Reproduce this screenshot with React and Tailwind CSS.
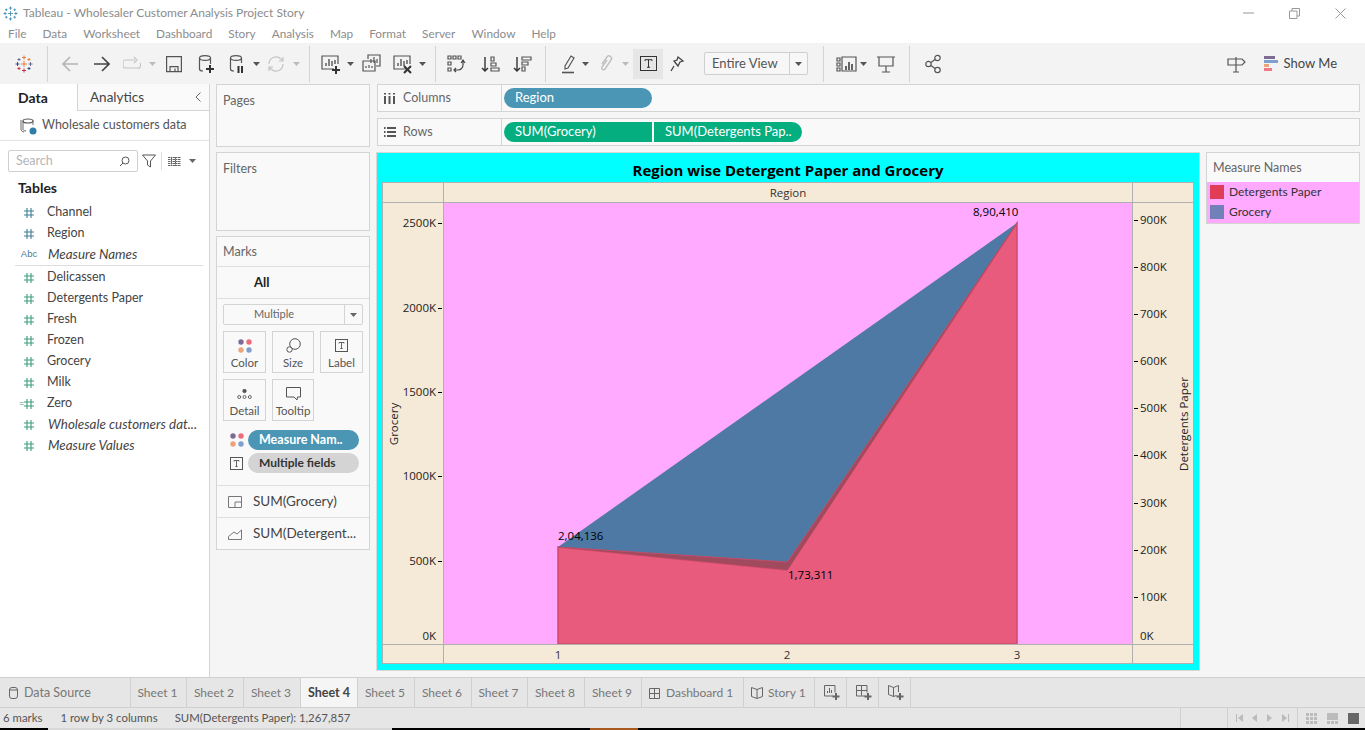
import * as React from 'react';

const FONT = "font-['Lato','Open_Sans',sans-serif]"
const MENU = ['File','Data','Worksheet','Dashboard','Story','Analysis','Map','Format','Server','Window','Help']
const DIMS = [
  { name: 'Channel' },
  { name: 'Region' },
  { name: 'Measure Names', abc: true, italic: true },
]
const MEASURES = [
  { name: 'Delicassen' },
  { name: 'Detergents Paper' },
  { name: 'Fresh' },
  { name: 'Frozen' },
  { name: 'Grocery' },
  { name: 'Milk' },
  { name: 'Zero', calc: true },
  { name: 'Wholesale customers dat...', italic: true },
  { name: 'Measure Values', italic: true },
]
const SHEETS = [
  { name: 'Sheet 1', w: 'w-[56px]' },
  { name: 'Sheet 2', w: 'w-[57px]' },
  { name: 'Sheet 3', w: 'w-[57px]' },
  { name: 'Sheet 4', w: 'w-[57px]', active: true },
  { name: 'Sheet 5', w: 'w-[57px]' },
  { name: 'Sheet 6', w: 'w-[57px]' },
  { name: 'Sheet 7', w: 'w-[56px]' },
  { name: 'Sheet 8', w: 'w-[57px]' },
  { name: 'Sheet 9', w: 'w-[57px]' },
]
const LEFT_TICKS = [['2500K',223],['2000K',307.5],['1500K',392],['1000K',476],['500K',560.5],['0K',644]]
const RIGHT_TICKS = [['900K',220],['800K',267],['700K',314],['600K',361],['500K',408],['400K',455],['300K',503],['200K',550],['100K',597],['0K',644]]

function Caret({ className = '', color = '#888' }) {
  return <svg width="7" height="4" viewBox="0 0 7 4" className={className}><path d="M0 0h7L3.5 4z" fill={color}/></svg>
}
function Divider({ className = '' }) {
  return <div className={`w-px h-[36px] bg-[#d4d4d4] ${className}`}/>
}
function Ico({ w, h = 20, className = '', children, vb }) {
  return <svg width={w} height={h} viewBox={vb || `0 0 ${w} ${h}`} fill="none" stroke="#555" strokeWidth="1.2" className={className}>{children}</svg>
}
function TableauLogo({ size = 18, mono }) {
  const c = mono ? ['#2a7fa8','#2a7fa8','#2a7fa8','#2a7fa8'] : ['#e8762c','#5b6591','#c72035','#1f447a']
  const cross = (x, y, r, col) => <path key={`${x}-${y}`} d={`M${x-r} ${y}h${2*r}M${x} ${y-r}v${2*r}`} stroke={col} strokeWidth="0.9" fill="none"/>
  return (
    <svg width={size} height={size} viewBox="0 0 18 18">
      {cross(9,9,3,c[0])}
      {cross(9,2.5,2,c[0])}{cross(2.5,9,2,c[3])}{cross(15.5,9,2,c[1])}{cross(9,15.5,2,c[2])}
      {cross(4,4.5,1.5,c[1])}{cross(14,4.5,1.5,c[0])}{cross(4,13.5,1.5,c[2])}{cross(14,13.5,1.5,c[3])}
    </svg>
  )
}
function Hash({ color }) {
  return (
    <svg width="10" height="10" viewBox="0 0 10 10" stroke={color} strokeWidth="1.1" fill="none">
      <path d="M3 0v10M7 0v10M0 3h10M0 7h10"/>
    </svg>
  )
}
function Dots({ className = '' }) {
  return (
    <svg width="14" height="14" viewBox="0 0 14 14" className={className}>
      <circle cx="3" cy="3" r="2.7" fill="#7d6b94"/><circle cx="11" cy="3" r="2.7" fill="#ef6a7a"/>
      <circle cx="3" cy="11" r="2.7" fill="#efa37a"/><circle cx="11" cy="11" r="2.7" fill="#7f9fcf"/>
    </svg>
  )
}
function TBox({ size = 13 }) {
  return (
    <svg width={size} height={size} viewBox="0 0 13 13" fill="none" stroke="#555">
      <rect x=".5" y=".5" width="12" height="12"/>
      <path d="M4 4.500V3.500h5v1M6.500 3.500v6M5.300 9.500h2.400" strokeWidth=".9"/>
    </svg>
  )
}
function MiniChart({ children }) {
  return (
    <Ico w={20} h={20}>
      <path d="M13 15H1V2h16v8"/>
      <path d="M5 12V9M8 12V5M11 12V7M14 10V6" strokeWidth="1.4"/>
      {children}
    </Ico>
  )
}

function TitleBar() {
  return (
    <div className="h-[26px] bg-white flex items-center shrink-0">
      <div className="ml-[3px] mr-[5px] flex"><TableauLogo size={15} mono/></div>
      <span className="text-[12px] text-[#8c8c8c]">Tableau - Wholesaler Customer Analysis Project Story</span>
      <div className="ml-auto flex items-center">
        <svg width="11" height="2" viewBox="0 0 11 2" className="mr-[35px]"><path d="M0 1h11" stroke="#999"/></svg>
        <svg width="11" height="11" viewBox="0 0 11 11" fill="none" stroke="#999" className="mr-[35px]"><path d="M.5 3h7.500v7.500H.5zM3 3V.5h7.500V8H8"/></svg>
        <svg width="11" height="11" viewBox="0 0 11 11" fill="none" stroke="#999" className="mr-[19px]"><path d="M.5.5l10 10M10.500.5l-10 10"/></svg>
      </div>
    </div>
  )
}

function MenuBar() {
  return (
    <div className="h-[17px] bg-white flex items-center pl-[8px] pb-[2px] gap-[16px] text-[11.8px] text-[#8c8c8c] shrink-0">
      {MENU.map(m => <span key={m}>{m}</span>)}
    </div>
  )
}

function Toolbar() {
  return (
    <div className="h-[41px] bg-[#f3f3f3] flex items-center pl-[15px] shrink-0">
      <TableauLogo/>
      <Divider className="ml-[14px]"/>
      <Ico w={16} className="ml-[14px]"><path d="M16 10H1M8 3l-7 7 7 7" stroke="#b5b5b5" strokeWidth="1.6"/></Ico>
      <Ico w={16} className="ml-[16px]"><path d="M0 10h15M8 3l7 7-7 7" stroke="#444" strokeWidth="1.6"/></Ico>
      <Ico w={18} className="ml-[13px]"><path d="M12 6h-10a1.500 3 0 0 0 0 8h13a2 3 0 0 0 2-5M11 3l3 3-3 3" stroke="#c4c4c4"/></Ico>
      <Caret className="ml-[8px]" color="#bbb"/>
      <Ico w={16} className="ml-[10px]"><path d="M.6 2.600h14.800v15H.6zM4 17.600v-5h8v5M9 17.600v-3"/></Ico>
      <Ico w={16} className="ml-[16px]"><ellipse cx="7" cy="4" rx="5.500" ry="2.400"/><path d="M1.500 4v11c0 1 1.500 2 3.500 2M12.500 4v6"/><path d="M12 11v8M8 15h8" strokeWidth="2" stroke="#333"/></Ico>
      <Ico w={16} className="ml-[15px]"><ellipse cx="7" cy="4" rx="5.500" ry="2.400"/><path d="M1.500 4v11c0 1 1.500 2 3.500 2M12.500 4v5"/><path d="M9.500 12v7M13 12v7" strokeWidth="2" stroke="#333"/></Ico>
      <Caret className="ml-[8px]" color="#555"/>
      <Ico w={18} className="ml-[7px]"><path d="M2 10a7 7 0 0 1 12-5l2 2M16 10a7 7 0 0 1-12 5l-2-2M16 3v4h-4M2 17v-4h4" stroke="#c4c4c4"/></Ico>
      <Caret className="ml-[8px]" color="#bbb"/>
      <Divider className="ml-[9px]"/>
      <div className="ml-[11px] flex"><MiniChart><path d="M15 12v8M11 16h8" strokeWidth="2" stroke="#333"/></MiniChart></div>
      <Caret className="ml-[6px]" color="#555"/>
      <Ico w={19} className="ml-[8px]"><path d="M6 5V1h12v11h-4"/><path d="M1 7h12v10H1z"/><path d="M9 9V5M12 9V3M15 9V5M4 14v-2M7 14v-3M10 14v-2"/></Ico>
      <div className="ml-[12px] flex"><MiniChart><path d="M11 12l7 7M18 12l-7 7" strokeWidth="2" stroke="#333"/></MiniChart></div>
      <Caret className="ml-[6px]" color="#555"/>
      <Divider className="ml-[9px]"/>
      <Ico w={20} className="ml-[11px]"><path d="M1 2h3v3H1zM6 2h3v3H6zM11 2h3v3h-3zM1 8h3v3H1zM1 14h3v3H1z"/><path d="M16 6v5a5 5 0 0 1-5 5H7M14 9l2-3 2 3M9 14l-2 2 2 2" stroke="#444"/></Ico>
      <Ico w={19} className="ml-[14px]"><path d="M4 3v14M1 14l3 3 3-3" stroke="#333" strokeWidth="1.4"/><path d="M10 3h3v4h-3zM10 9h5v3h-5zM10 14h8v3h-8z"/></Ico>
      <Ico w={19} className="ml-[13px]"><path d="M4 3v14M1 14l3 3 3-3" stroke="#333" strokeWidth="1.4"/><path d="M9 3h9v3H9zM9 8h6v3H9zM9 13h3v4H9z"/></Ico>
      <Divider className="ml-[13px]"/>
      <Ico w={16} className="ml-[15px]"><path d="M4 12L10 2l3 2-6 10-3 1z" stroke="#555"/><path d="M1 18.500h12" strokeWidth="1.600"/></Ico>
      <Caret className="ml-[5px]" color="#555"/>
      <Ico w={16} className="ml-[9px]"><path d="M4 10l5-7a2.500 2.500 0 0 1 4 3l-6 9a1.500 1.500 0 0 1-3-2l5-7" stroke="#c0c0c0" strokeWidth="1.4"/></Ico>
      <Caret className="ml-[8px]" color="#bbb"/>
      <div className="ml-[4px] w-[30px] h-[30px] bg-[#e6e6e6] flex items-center justify-center">
        <svg width="17" height="15" viewBox="0 0 17 15" fill="none" stroke="#333"><rect x=".5" y=".5" width="16" height="14"/><path d="M5 5V3.700h7V5M8.500 3.700v7.600M7 11.300h3"/></svg>
      </div>
      <Ico w={15} className="ml-[7px]"><path d="M8 3l5 4-3 1-2 4-4-5 3-1zM4 12l-3 5" stroke="#444" strokeWidth="1.300"/></Ico>
      <div className="ml-[19px] w-[104px] h-[23px] bg-[#f7f7f7] border border-[#cfcfcf] rounded-[2px] flex items-center">
        <span className="flex-1 pl-[7px] text-[13px] text-[#555]">Entire View</span>
        <div className="w-[18px] h-full border-l border-[#cfcfcf] flex items-center justify-center"><Caret color="#555"/></div>
      </div>
      <Divider className="ml-[15px]"/>
      <Ico w={21} className="ml-[12px]"><path d="M1 4h3v3H1zM1 9h3v3H1zM1 14h3v3H1zM6 3h14v14H6z"/><path d="M10 16v-4M13 16V8M16 16v-6" strokeWidth="1.800"/></Ico>
      <Caret className="ml-[3px]" color="#555"/>
      <Ico w={18} className="ml-[10px]"><path d="M0 3h18M2 3v9h14V3M9 12v6M5 18h8"/></Ico>
      <Divider className="ml-[14px]"/>
      <Ico w={16} className="ml-[15px]"><circle cx="3.500" cy="10" r="2.700"/><circle cx="12.500" cy="4" r="2.700"/><circle cx="12.500" cy="16" r="2.700"/><path d="M6 8.500l4-3M6 11.500l4 3"/></Ico>
      <div className="ml-auto flex items-center pr-[28px]">
        <Ico w={19} h={20}><path d="M9 3v15M6 18h6M1 5h14l3 3-3 3H1z"/></Ico>
        <svg width="14" height="16" viewBox="0 0 14 16" className="ml-[18px]">
          <rect width="11" height="3" fill="#7d6b94"/><rect y="4" width="14" height="3" fill="#7f9fcf"/>
          <rect y="8" width="5" height="3" fill="#efa37a"/><rect y="12" width="8" height="3" fill="#ef7a86"/>
        </svg>
        <span className="ml-[6px] text-[13px] text-[#444]">Show Me</span>
      </div>
    </div>
  )
}

function FieldRow({ f, measure }) {
  return (
    <div className="h-[21px] flex items-center">
      <div className="w-[47px] flex justify-center items-center pl-[11px] relative">
        {f.abc
          ? <span className="font-['Liberation_Sans',sans-serif] text-[9.5px] text-[#4a7c94]">Abc</span>
          : <>
              {f.calc && <span className="absolute left-[19px] text-[9px] leading-none text-[#3d9c7c]">=</span>}
              <Hash color={measure ? '#3d9c7c' : '#3c7f95'}/>
            </>}
      </div>
      <span className={`text-[#444] whitespace-nowrap ${f.italic ? 'italic text-[13.4px] ml-px' : 'text-[12.5px]'}`}>{f.name}</span>
    </div>
  )
}

function DataPane() {
  return (
    <div className="w-[210px] bg-white border-r border-[#d4d4d4] shrink-0 flex flex-col">
      <div className="h-[27px] flex">
        <div className="w-[77px] flex items-center pl-[18px] text-[14px] font-bold text-[#222]">Data</div>
        <div className="flex-1 flex items-center pl-[12px] text-[13.5px] text-[#444] border-l border-b border-[#d4d4d4] bg-[#fafafa]">
          Analytics
          <svg width="6" height="10" viewBox="0 0 6 10" fill="none" stroke="#666" className="ml-auto mr-[8px]"><path d="M5.500.5L1 5l4.500 4.500"/></svg>
        </div>
      </div>
      <div className="h-[30px] flex items-center border-b border-[#e3e3e3] pl-[20px]">
        <Ico w={17} h={18}><ellipse cx="8" cy="4" rx="5" ry="2"/><path d="M3 4v8c0 1 1 2 3 2M13 4v4M1 3v9c0 1 1 3 3 3" strokeWidth=".9"/><circle cx="13" cy="14" r="3.500" fill="#2f7ea8" stroke="none"/></Ico>
        <span className="ml-[5px] text-[12.5px] text-[#555]">Wholesale customers data</span>
      </div>
      <div className="mt-[9px] ml-[8px] flex items-center">
        <div className="w-[130px] h-[22px] border border-[#cfcfcf] rounded-[2px] flex items-center px-[7px]">
          <span className="text-[12.5px] text-[#b5b5b5]">Search</span>
          <svg width="11" height="11" viewBox="0 0 11 11" fill="none" stroke="#555" className="ml-auto"><circle cx="6.500" cy="4.500" r="3.500"/><path d="M4 7l-3 3"/></svg>
        </div>
        <svg width="14" height="14" viewBox="0 0 14 14" fill="none" stroke="#555" className="ml-[4px]"><path d="M.5 1h13L8.500 7v6l-3-2V7z"/></svg>
        <div className="w-px h-[18px] bg-[#ddd] ml-[5px]"/>
        <svg width="13" height="9" viewBox="0 0 13 9" fill="none" stroke="#666" className="ml-[6px]"><path d="M0 .5h13M0 2.500h13M0 4.500h13M0 6.500h13M0 8.500h13M3.500 0v9M7.500 0v9" strokeDasharray="2 .5"/></svg>
        <Caret className="ml-[8px]" color="#666"/>
      </div>
      <div className="mt-[6px] ml-[18px] text-[14px] font-bold text-[#222] leading-[20px]">Tables</div>
      <div className="mt-[4px]">
        {DIMS.map(f => <FieldRow key={f.name} f={f}/>)}
        <div className="h-px bg-[#dcdcdc] ml-[15px] mr-[6px] mb-[1px]"/>
        {MEASURES.map(f => <FieldRow key={f.name} f={f} measure/>)}
      </div>
    </div>
  )
}

function MarkCard({ label, narrow, children }) {
  return (
    <div className={`h-[42px] border border-[#d4d4d4] flex flex-col items-center pt-[5px] ${narrow ? 'w-[42px]' : 'w-[43px]'}`}>
      <div className="h-[17px] flex items-center">{children}</div>
      <span className="text-[11.5px] text-[#555] leading-[15px] mt-[1px]">{label}</span>
    </div>
  )
}

function Panel({ title, className }) {
  return (
    <div className={`bg-[#f9f9f9] border border-[#d4d4d4] pl-[6px] pt-[7px] text-[12.5px] text-[#666] ${className}`}>{title}</div>
  )
}

function MarksPanel() {
  return (
    <div className="h-[314px] bg-[#f9f9f9] border border-[#d4d4d4] flex flex-col">
      <div className="h-[30px] flex items-center pl-[6px] pt-[1px] border-b border-[#dedede] text-[12.5px] text-[#666]">Marks</div>
      <div className="h-[32px] flex items-center pl-[37px] border-b border-[#dedede] text-[13px] font-bold text-[#222]">All</div>
      <div className="mx-[6px] mt-[5px] h-[21px] border border-[#d4d4d4] rounded-[2px] flex items-center">
        <span className="flex-1 text-center text-[11px] text-[#666] pr-[20px]">Multiple</span>
        <div className="w-[18px] h-full border-l border-[#d4d4d4] flex items-center justify-center"><Caret color="#666"/></div>
      </div>
      <div className="mx-[6px] mt-[6px] flex gap-[6px] flex-wrap">
        <MarkCard label="Color"><Dots/></MarkCard>
        <MarkCard label="Size" narrow><svg width="15" height="15" viewBox="0 0 15 15" fill="none" stroke="#555"><circle cx="9" cy="6" r="5.300"/><circle cx="3.500" cy="11.500" r="2.700" fill="#f9f9f9"/></svg></MarkCard>
        <MarkCard label="Label"><TBox/></MarkCard>
        <MarkCard label="Detail"><svg width="15" height="10" viewBox="0 0 15 10" fill="none" stroke="#555" strokeWidth=".9"><circle cx="7.500" cy="2" r="1.700" fill="#555"/><circle cx="2.200" cy="8" r="1.500"/><circle cx="7.500" cy="8" r="1.500"/><circle cx="12.800" cy="8" r="1.500"/></svg></MarkCard>
        <MarkCard label="Tooltip" narrow><svg width="15" height="14" viewBox="0 0 15 14" fill="none" stroke="#555"><path d="M.5.5h14v9.500h-3l-.5 3-3-3H.5z"/></svg></MarkCard>
      </div>
      <div className="mt-[9px] flex items-center h-[20px]">
        <Dots className="ml-[13px]"/>
        <div className="ml-[4px] w-[111px] h-[20px] rounded-full bg-[#4a96b4] text-white text-[12.5px] font-bold flex items-center pl-[11px] whitespace-nowrap">Measure Nam..</div>
      </div>
      <div className="mt-[3px] flex items-center h-[20px]">
        <div className="ml-[13px] w-[13px] flex"><TBox/></div>
        <div className="ml-[5px] w-[111px] h-[20px] rounded-full bg-[#d4d4d4] text-[#333] text-[12px] font-bold flex items-center pl-[11px] whitespace-nowrap">Multiple fields</div>
      </div>
      <div className="mt-[12px] h-[32px] border-t border-[#dedede] flex items-center pl-[11px] text-[13.5px] text-[#444]">
        <svg width="14" height="12" viewBox="0 0 14 12" fill="none" stroke="#777"><path d="M.5.5h13v11H.5zM7 11.500V6h6.500"/></svg>
        <span className="ml-[11px]">SUM(Grocery)</span>
      </div>
      <div className="h-[32px] border-t border-[#dedede] flex items-center pl-[11px] text-[13.5px] text-[#444] whitespace-nowrap">
        <svg width="14" height="12" viewBox="0 0 14 12" fill="none" stroke="#777"><path d="M.5 11.500h13V2L9 6 6 4 .5 8.500z"/></svg>
        <span className="ml-[11px]">SUM(Detergent...</span>
      </div>
    </div>
  )
}

function Shelf({ label, icon, children }) {
  return (
    <div className="h-[28px] bg-[#f9f9f9] border border-[#d4d4d4] flex items-center">
      <div className="w-[124px] h-full border-r border-[#d4d4d4] flex items-center pl-[6px] text-[12.5px] text-[#666]">
        <div className="w-[13px] flex">{icon}</div>
        <span className="ml-[6px]">{label}</span>
      </div>
      <div className="flex items-center gap-[2px] pl-[2px]">{children}</div>
    </div>
  )
}

function Pill({ children, color, round }) {
  return (
    <div className={`w-[148px] h-[20px] ${color} ${round} text-white text-[13px] flex items-center pl-[11px] whitespace-nowrap`}>{children}</div>
  )
}

function AxisTick({ label, y, right }) {
  // y is in page pixels; the plot starts at 203
  const top = y - 203
  const labelTop = label === '0K' ? top - 16 : top - 8
  return (
    <>
      <span
        className={`absolute text-[11.5px] leading-[16px] text-[#222] whitespace-nowrap ${right ? 'left-[7px]' : 'right-[7px]'}`}
        style={{ top: labelTop }}
      >{label}</span>
      {label !== '0K' && <span className={`absolute w-[4px] h-px bg-black ${right ? 'left-[1px]' : 'right-[1px]'}`} style={{ top }}/>}
    </>
  )
}

function Chart() {
  return (
    <div className="-ml-px w-[824px] h-[519px] bg-[#00ffff] border border-[#d8d8d8] flex flex-col px-[5px] pb-[6px]">
      <div className="h-[29px] pt-[5px] flex items-center justify-center text-[15px] font-bold text-black font-['Open_Sans',sans-serif]">Region wise Detergent Paper and Grocery</div>
      <div className="flex-1 border border-[#b0b0b0] bg-[#f5e9d8] grid grid-cols-[61px_1fr_60px] grid-rows-[20px_1fr_19px] font-['Open_Sans',sans-serif] text-[11.5px] text-[#333]">
        <div className="border-b border-r border-[#b0b0b0]"/>
        <div className="border-b border-r border-[#b0b0b0] flex items-center justify-center">Region</div>
        <div className="border-b border-[#b0b0b0]"/>

        <div className="relative border-r border-[#b0b0b0]">
          <span className="absolute left-[11px] top-1/2 -translate-y-1/2 -translate-x-1/2 -rotate-90 whitespace-nowrap text-[#222]">Grocery</span>
          {LEFT_TICKS.map(([l, y]) => <AxisTick key={l} label={l} y={y}/>)}
        </div>
        <div className="relative bg-[#ffa9ff] border-r border-[#b0b0b0]">
          <svg width="688" height="441" viewBox="0 0 688 441" className="block">
            <polygon points="114,344 343,367 573,20 573,441 114,441" fill="#e85b7d" stroke="#d24a68" strokeWidth="1.5"/>
            <polygon points="114,344 343.5,367 573,20 343.5,359" fill="#a14a5e"/>
            <polygon points="114,344 343.5,359 573,20" fill="#4e79a5"/>
            <path d="M114 344L343.5 359L573 20" fill="none" stroke="#bd4a62" strokeWidth="1"/>
          </svg>
          <span className="absolute left-[114px] top-[324px] text-black whitespace-nowrap">2,04,136</span>
          <span className="absolute left-[344px] top-[363px] text-black whitespace-nowrap">1,73,311</span>
          <span className="absolute left-[529px] top-[0px] text-black whitespace-nowrap">8,90,410</span>
        </div>
        <div className="relative">
          {RIGHT_TICKS.map(([l, y]) => <AxisTick key={l} label={l} y={y} right/>)}
          <span className="absolute left-[51px] top-1/2 -translate-y-1/2 -translate-x-1/2 -rotate-90 whitespace-nowrap text-[#222]">Detergents Paper</span>
        </div>

        <div className="border-t border-r border-[#b0b0b0]"/>
        <div className="border-t border-r border-[#b0b0b0] relative">
          <span className="absolute left-[114px] -translate-x-1/2 top-[1px]">1</span>
          <span className="absolute left-[343px] -translate-x-1/2 top-[1px]">2</span>
          <span className="absolute left-[573px] -translate-x-1/2 top-[1px]">3</span>
        </div>
        <div className="border-t border-[#b0b0b0]"/>
      </div>
    </div>
  )
}

function Legend() {
  return (
    <div className="w-[154px] h-[72px] ml-[6px] bg-[#f9f9f9] border border-[#d4d4d4] flex flex-col">
      <div className="h-[29px] flex items-center pl-[6px] pt-[2px] text-[12.5px] text-[#666]">Measure Names</div>
      <div className="flex-1 bg-[#ffa9ff] pl-[3px] pt-[3px] flex flex-col gap-[6px] text-[12px] text-[#333]">
        <div className="flex items-center h-[14px]"><span className="w-[14px] h-[14px] bg-[#e03e56]"/><span className="ml-[5px]">Detergents Paper</span></div>
        <div className="flex items-center h-[14px]"><span className="w-[14px] h-[14px] bg-[#6f81b8]"/><span className="ml-[5px]">Grocery</span></div>
      </div>
    </div>
  )
}

function TabBar() {
  const tab = 'h-full border-r border-[#d0d0d0] flex items-center pt-px'
  return (
    <div className="h-[31px] bg-[#e6e6e6] border-t border-b border-[#d0d0d0] flex text-[12px] text-[#777] shrink-0">
      <div className={`${tab} w-[131px] pl-[9px] text-[12.5px]`}>
        <svg width="9" height="12" viewBox="0 0 9 12" fill="none" stroke="#666"><rect x=".5" y=".5" width="8" height="11" rx="2.500"/><path d="M.5 3h8"/></svg>
        <span className="ml-[6px]">Data Source</span>
      </div>
      {SHEETS.map(s => (
        <div key={s.name} className={`${tab} ${s.w} justify-center ${s.active ? 'bg-[#f5f5f5] font-bold text-[12.5px] text-[#444]' : 'pr-[2px]'}`}>{s.name}</div>
      ))}
      <div className={`${tab} w-[102px] pl-[7px]`}>
        <svg width="11" height="11" viewBox="0 0 11 11" fill="none" stroke="#666"><path d="M.5.5h10v10H.5zM5.500.5v10M.5 5.500h10"/></svg>
        <span className="ml-[6px]">Dashboard 1</span>
      </div>
      <div className={`${tab} w-[71px] pl-[7px]`}>
        <svg width="12" height="12" viewBox="0 0 12 12" fill="none" stroke="#666"><path d="M6 2.500L.5.5v9l5.500 2 5.500-2v-9zM6 2.500v9"/></svg>
        <span className="ml-[5px]">Story 1</span>
      </div>
      <div className={`${tab} w-[32px] pl-[9px]`}>
        <svg width="16" height="16" viewBox="0 0 16 16" fill="none" stroke="#666"><path d="M9 11H.5V.5H11v7M3.500 8V6M5.500 8V3M7.500 8V5"/><path d="M12 8v7M8.500 11.500h7" strokeWidth="2"/></svg>
      </div>
      <div className={`${tab} w-[32px] pl-[9px]`}>
        <svg width="16" height="16" viewBox="0 0 16 16" fill="none" stroke="#666"><path d="M9 11H.5V.5H11v7M5.500.5v10M.5 5.500H11"/><path d="M12 8v7M8.500 11.500h7" strokeWidth="2"/></svg>
      </div>
      <div className={`${tab} w-[32px] pl-[9px]`}>
        <svg width="16" height="16" viewBox="0 0 16 16" fill="none" stroke="#666"><path d="M5.500 2.500L.5.5v9l5 2 3-1M5.500 2.500l5-2V7M5.500 2.500v9"/><path d="M12 8v7M8.500 11.500h7" strokeWidth="2"/></svg>
      </div>
    </div>
  )
}

function StatusBar() {
  return (
    <div className="h-[20px] bg-[#e6e6e6] flex items-center text-[11.4px] text-[#555] shrink-0">
      <span className="ml-[3px]">6 marks</span>
      <span className="ml-[18px]">1 row by 3 columns</span>
      <span className="ml-[17px]">SUM(Detergents Paper): 1,267,857</span>
      <div className="ml-auto flex h-full">
        <div className="w-[47px] border-l border-[#d0d0d0]"/>
        <div className="w-[71px] border-l border-r border-[#d0d0d0] flex items-center justify-center gap-[9px]">
          <svg width="7" height="8" viewBox="0 0 7 8" fill="#bbb"><path d="M0 0h1v8H0zM7 0v8L2 4z"/></svg>
          <svg width="6" height="8" viewBox="0 0 6 8" fill="#bbb"><path d="M5 0v8L0 4z"/></svg>
          <svg width="6" height="8" viewBox="0 0 6 8" fill="#bbb"><path d="M0 0v8l5-4z"/></svg>
          <svg width="7" height="8" viewBox="0 0 7 8" fill="#bbb"><path d="M6 0h1v8H6zM0 0v8l5-4z"/></svg>
        </div>
        <div className="flex-none w-[67px] flex items-center pl-[8px]">
          <svg width="11" height="11" viewBox="0 0 11 11" fill="#bbb"><path d="M0 0h3v3H0zM4 0h3v3H4zM8 0h3v3H8zM0 4h3v3H0zM4 4h3v3H4zM8 4h3v3H8zM0 8h3v3H0zM4 8h3v3H4zM8 8h3v3H8z"/></svg>
          <svg width="11" height="11" viewBox="0 0 11 11" fill="#bbb" className="ml-[10px]"><path d="M0 0h11v7H0zM0 8h3v3H0zM4 8h3v3H4zM8 8h3v3H8z"/></svg>
          <span className="ml-[10px] w-[11px] h-[11px] bg-[#666]"/>
        </div>
      </div>
    </div>
  )
}

export default function App() {
  return (
    <div className={`w-[1365px] h-[730px] overflow-hidden flex flex-col bg-[#f5f5f5] ${FONT}`}>
      <TitleBar/>
      <MenuBar/>
      <Toolbar/>
      <div className="flex-1 flex min-h-0">
        <DataPane/>
        <div className="w-[154px] ml-[6px] flex flex-col gap-[5px]">
          <Panel title="Pages" className="h-[63px]"/>
          <Panel title="Filters" className="h-[79px]"/>
          <MarksPanel/>
        </div>
        <div className="ml-[7px] flex flex-col w-[983px]">
          <div className="flex flex-col gap-[6px]">
            <Shelf label="Columns" icon={<svg width="11" height="11" viewBox="0 0 11 11" fill="#555"><path d="M0 3h2v8H0zM4.500 3h2v8h-2zM9 3h2v8H9zM0 0h2v1.500H0zM4.500 0h2v1.500h-2zM9 0h2v1.500H9z"/></svg>}>
              <Pill color="bg-[#4a96b4]" round="rounded-full">Region</Pill>
            </Shelf>
            <Shelf label="Rows" icon={<svg width="12" height="10" viewBox="0 0 12 10" fill="#555"><path d="M3 0h9v2H3zM3 4h9v2H3zM3 8h9v2H3zM0 0h1.500v2H0zM0 4h1.500v2H0zM0 8h1.500v2H0z"/></svg>}>
              <Pill color="bg-[#04ae7f]" round="rounded-l-full">SUM(Grocery)</Pill>
              <Pill color="bg-[#04ae7f]" round="rounded-r-full">SUM(Detergents Pap..</Pill>
            </Shelf>
          </div>
          <div className="flex mt-[6px]">
            <Chart/>
            <Legend/>
          </div>
        </div>
      </div>
      <TabBar/>
      <StatusBar/>
      <div className="h-[2px] flex bg-black shrink-0">
        <div className="ml-[48px] w-[344px] bg-[#d8d8d8]"/>
        <div className="ml-[198px] w-[48px] bg-[#a85a1e]"/>
      </div>
    </div>
  )
}
